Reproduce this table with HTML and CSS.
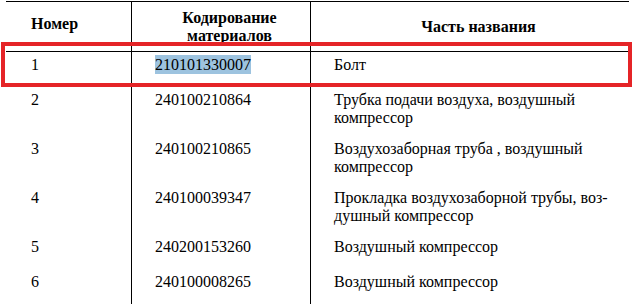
FILE: index.html
```html
<!DOCTYPE html>
<html lang="ru">
<head>
<meta charset="utf-8">
<title>Таблица</title>
<link rel="stylesheet" href="styles.css">
</head>
<body>
<div class="sheet">
  <table class="parts">
    <thead>
      <tr>
        <th class="c1 h-num">Номер</th>
        <th class="c2">Кодирование<br>материалов</th>
        <th class="c3">Часть названия</th>
      </tr>
    </thead>
    <tbody>
      <tr class="one">
        <td class="c1">1</td>
        <td class="c2"><span class="sel">210101330007</span></td>
        <td class="c3">Болт</td>
      </tr>
      <tr>
        <td class="c1">2</td>
        <td class="c2">240100210864</td>
        <td class="c3">Трубка подачи воздуха, воздушный<br>компрессор</td>
      </tr>
      <tr>
        <td class="c1">3</td>
        <td class="c2">240100210865</td>
        <td class="c3">Воздухозаборная труба , воздушный<br>компрессор</td>
      </tr>
      <tr>
        <td class="c1">4</td>
        <td class="c2">240100039347</td>
        <td class="c3">Прокладка воздухозаборной трубы, воз-<br>душный компрессор</td>
      </tr>
      <tr class="one">
        <td class="c1">5</td>
        <td class="c2">240200153260</td>
        <td class="c3">Воздушный компрессор</td>
      </tr>
      <tr class="one">
        <td class="c1">6</td>
        <td class="c2">240100008265</td>
        <td class="c3">Воздушный компрессор</td>
      </tr>
    </tbody>
  </table>
  <div class="mark"></div>
</div>
</body>
</html>
```

FILE: styles.css
```css
html, body {
  margin: 0;
  padding: 0;
  background: #ffffff;
}

body {
  font-family: "Liberation Serif", "Times New Roman", serif;
  font-size: 16px;
  color: #000000;
  overflow: hidden;
}

.sheet {
  position: relative;
  padding: 1px 0 0 6px;
}

.parts {
  border-collapse: separate;
  border-spacing: 0;
  table-layout: fixed;
  width: 623px;
  border-top: 1px solid #000;
  font-family: "Liberation Serif", "Times New Roman", serif;
}

.parts th,
.parts td {
  box-sizing: border-box;
  line-height: 18px;
  padding: 4px 6px 9px 23px;
  vertical-align: top;
  text-align: left;
  font-weight: normal;
}

.parts .one td {
  padding-bottom: 13px;
}

.parts .c1 { width: 125px; padding-left: 25px; }
.parts .c2 { width: 179px; border-left: 1px solid #000; }
.parts .c3 { width: 319px; border-left: 1px solid #000; }

.parts th {
  height: 50px;
  padding-top: 0;
  padding-bottom: 0;
  border-bottom: 1px solid #000;
  vertical-align: middle;
  text-align: center;
  font-weight: bold;
}

.parts th.h-num {
  text-align: left;
  padding-bottom: 6px;
}

.sel {
  background: #9dc3df;
  padding: 1px 0;
}

.mark {
  position: absolute;
  left: 1px;
  top: 42px;
  width: 631px;
  height: 45px;
  box-sizing: border-box;
  border: 4px solid #e52427;
}
```
